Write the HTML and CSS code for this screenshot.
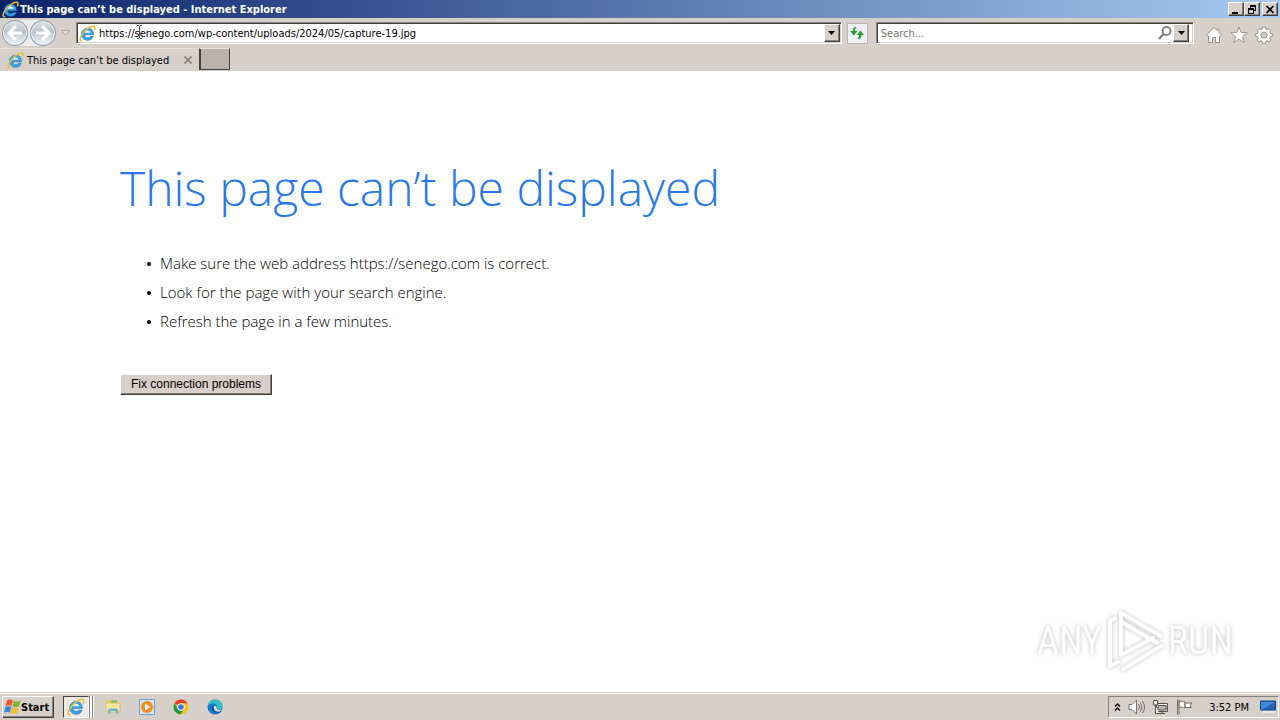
FILE: index.html
```html
<!DOCTYPE html>
<html lang="en">

<head>
    <meta charset="UTF-8">
    <meta name="viewport" content="width=device-width, initial-scale=1.0">
    <title>This page can’t be displayed</title>
    <link rel="stylesheet" href="styles.css">
</head>

<body>
    <!-- Shared icons -->
    <svg class="defs" width="0" height="0">
        <defs>
            <symbol id="ie" viewBox="0 0 16 16">
                <path d="M13.6 9.2H5.2c.2 2 1.500 2.800 3 2.800 1.200 0 2-.5 2.400-1.200h2.800c-.8 2.300-2.700 3.600-5.200 3.600C4.800 14.400 2.400 12 2.400 8.700S4.800 3 8.200 3c3.500 0 5.600 2.500 5.400 6.200z" fill="#3aa5e6" stroke="#1878b8" stroke-width=".6" />
                <path d="M5.300 7.300h5.500C10.600 6 9.600 5.200 8.100 5.200S5.600 6 5.300 7.300z" fill="#e6f4fc" />
                <path d="M2.500 14.800C.2 15 .6 11.500 4 7.400 7.600 3 12.800.2 14.600 1.400c.8.6.6 1.800-.1 3.100" fill="none" stroke="#f2bd2c" stroke-width="1.400" stroke-linecap="round" />
            </symbol>
        </defs>
    </svg>

    <header class="title-bar">
        <svg class="icon"><use href="#ie" /></svg>
        <span class="title-text">This page can’t be displayed - Internet Explorer</span>
        <div class="window-buttons">
            <button type="button" aria-label="Minimize"><svg width="10" height="9" viewBox="0 0 10 9"><path d="M1 7h6v2H1z" /></svg></button>
            <button type="button" aria-label="Restore"><svg width="10" height="9" viewBox="0 0 10 9"><path d="M3 0h6v6H7V5h1V2H4v1H3zM1 3h6v6H1zM2 5v3h4V5z" fill-rule="evenodd" /></svg></button>
            <button type="button" class="close" aria-label="Close"><svg width="10" height="9" viewBox="0 0 10 9"><path d="M1.500 1l7 7M8.500 1l-7 7" stroke="#000" stroke-width="1.600" /></svg></button>
        </div>
    </header>

    <nav class="toolbar">
        <div class="history">
            <button type="button" aria-label="Back"><svg width="26" height="26" viewBox="0 0 26 26"><path d="M14 6l-7 7 7 7M8 13h12" /></svg></button>
            <button type="button" aria-label="Forward"><svg width="26" height="26" viewBox="0 0 26 26"><path d="M12 6l7 7-7 7M18 13H6" /></svg></button>
        </div>
        <button type="button" class="recent" aria-label="Recent pages"><svg width="9" height="6" viewBox="0 0 9 6"><path d="M.5.500h8l-4 4.500z" fill="#e6e2dc" stroke="#aaa49e" /></svg></button>
        <div class="field address">
            <svg class="icon"><use href="#ie" /></svg>
            <input type="text" aria-label="Address" value="https://senego.com/wp-content/uploads/2024/05/capture-19.jpg">
            <button type="button" class="drop" aria-label="Show addresses"><svg width="7" height="4" viewBox="0 0 7 4"><path d="M0 0h7L3.500 4z" /></svg></button>
            <svg class="caret" width="5" height="15" viewBox="0 0 5 15"><path d="M0 .5h2M3 .5h2M2.500 1v12M0 13.500h2M3 13.500h2" stroke="#555" fill="none" /></svg>
        </div>
        <button type="button" class="refresh" aria-label="Refresh"><svg width="16" height="16" viewBox="0 0 16 16"><path d="M7 2C4.500 2 4 3.500 4 6H1l4 4.500L8.500 6H6c0-1.800.2-2.500 1.500-3zM9 14c2.500 0 3.500-1.500 3.500-4H15l-3.500-4.500L7.500 10H10c0 1.800-.2 2.500-1.500 3z" fill="#2b9a35" /></svg></button>
        <div class="field search">
            <input type="text" aria-label="Search" placeholder="Search...">
            <svg width="16" height="16" viewBox="0 0 16 16" fill="none" stroke="#85817d" stroke-width="2"><circle cx="9.500" cy="6" r="4" /><path d="M6.500 9L2 14" stroke-width="2.400" /></svg>
            <button type="button" class="drop" aria-label="Search options"><svg width="7" height="4" viewBox="0 0 7 4"><path d="M0 0h7L3.500 4z" /></svg></button>
        </div>
        <div class="tools">
            <button type="button" aria-label="Home"><svg width="18" height="18" viewBox="0 0 18 18"><path d="M9 1.500L1.500 9 3 10.500l.5-.5v6.500h4v-5h3v5h4V10l.5.500L16.500 9 14 6.500V3h-2v1.500z" /></svg></button>
            <button type="button" aria-label="Favorites"><svg width="18" height="18" viewBox="0 0 18 18"><path d="M9 1l2.200 5.500 6 .4-4.600 3.800 1.500 5.800L9 13.300l-5.100 3.200 1.500-5.800L.8 6.900l6-.4z" /></svg></button>
            <button type="button" aria-label="Tools"><svg width="18" height="18" viewBox="0 0 18 18"><path d="M7.600 1h2.800l.4 2.100 1.300.5 1.800-1.200 2 2-1.200 1.800.5 1.300 2.100.4v2.600l-2.100.4-.5 1.300 1.200 1.800-2 2-1.800-1.200-1.300.5-.4 2H7.600l-.4-2-1.300-.5L4.100 16l-2-2 1.200-1.800-.5-1.300L.7 10.500V7.900l2.100-.4.5-1.300-1.200-1.800 2-2 1.800 1.200 1.300-.5z" /><circle cx="9" cy="9.200" r="3" fill="#d6cfca" /></svg></button>
        </div>
    </nav>

    <div class="tabs">
        <div class="tab">
            <svg class="icon"><use href="#ie" /></svg>
            <span>This page can’t be displayed</span>
            <button type="button" aria-label="Close tab"><svg width="8" height="8" viewBox="0 0 8 8"><path d="M.5.500l7 7M7.500.500l-7 7" stroke="#85807b" stroke-width="1.600" /></svg></button>
        </div>
        <button type="button" class="new-tab" aria-label="New tab"></button>
    </div>

    <main class="content">
        <h1>This page can’t be displayed</h1>
        <ul>
            <li>Make sure the web address https://senego.com is correct.</li>
            <li>Look for the page with your search engine.</li>
            <li>Refresh the page in a few minutes.</li>
        </ul>
        <button type="button" class="fix">Fix connection problems</button>
        <div class="watermark">
            <span>ANY</span>
            <svg width="60" height="66" viewBox="0 0 60 66" fill="none" stroke="#fff" stroke-width="4" stroke-linejoin="round" stroke-linecap="round"><path d="M16 47V5l40 23M18 15l34 20M16 47l32-17M10 10l-5 3v45l6-3M5 58l8-4M18 61l38-23" /></svg>
            <span>RUN</span>
        </div>
    </main>

    <footer class="taskbar">
        <button type="button" class="start">
            <svg width="17" height="16" viewBox="0 0 17 16"><path d="M3 1.500c2-1.500 4-1.300 6-.3L7.500 7C6 6 4 5.800 1.500 7z" fill="#ee582c" /><path d="M10 1.700c2 1.100 4 1 6.500-.1L15 7.300c-2.500 1-4.300.8-6.500-.3z" fill="#78b82c" /><path d="M1.300 8c2-1.200 4-1 6 0l-1.500 5.800c-1.800-1-3.800-1-5.800 0z" fill="#3a86d8" /><path d="M8.200 8.200c2 1.100 4 1.300 6.500.2l-1.500 5.600c-2.300 1-4.300.9-6.500-.2z" fill="#f6bd2b" /></svg>
            Start
        </button>
        <div class="quick-launch">
            <button type="button" class="active" aria-label="Internet Explorer"><svg width="18" height="18"><use href="#ie" /></svg></button>
            <button type="button" aria-label="Explorer"><svg width="18" height="18" viewBox="0 0 18 18"><path d="M2 2h5l1 1.500h7V14H2z" fill="#e9c965" /><path d="M7 2h6v4H7z" fill="#8bc46b" /><path d="M2 5h14v9H2z" fill="#f8e6a0" stroke="#cfae52" stroke-width=".6" /><path d="M4 16v-4q0-1.500 1.500-1.500h7Q14 10.500 14 12v4h-2v-3H6v3z" fill="#6eb4d8" /></svg></button>
            <button type="button" aria-label="Media Player"><svg width="18" height="18" viewBox="0 0 18 18"><path d="M1.500 1.500h15v15h-15z" fill="#d4e6f6" stroke="#6a9fce" /><circle cx="9" cy="9" r="6" fill="#f58a1f" /><path d="M7 5.500l5.500 3.500L7 12.500z" fill="#fff" /></svg></button>
            <button type="button" aria-label="Chrome"><svg width="18" height="18" viewBox="0 0 18 18"><circle cx="9" cy="9" r="7.500" fill="#fbc116" /><path d="M9 9L2.500 5.250A7.500 7.500 0 0 1 15.500 5.250H9z" fill="#e33b2e" /><path d="M2.500 5.250A7.500 7.500 0 0 0 8.500 16.500L12 10.800 9 9 5.700 10.800z" fill="#229a4d" /><circle cx="9" cy="9" r="3.700" fill="#fff" /><circle cx="9" cy="9" r="2.800" fill="#347be5" /></svg></button>
            <button type="button" aria-label="Edge"><svg width="18" height="18" viewBox="0 0 18 18"><circle cx="9" cy="9" r="7.500" fill="#1679ca" /><path d="M1.600 8.500C2 4 5.300 1.500 9 1.500c4.500 0 7.500 3 7.500 6.300 0 2.200-1.600 3.700-3.800 3.700-1.500 0-2.300-.6-2.300-1.200 0-.7.700-.8.700-2 0-1.500-1.600-3-4-3-2.500 0-4.500 1.200-5.500 3.200z" fill="#35bfc2" /><path d="M7 8.500c-1 4 3 6.500 8 4.500" fill="none" stroke="#104c9c" stroke-width="2" /><path d="M8 8.200q3-1 2.600 2.600 1.400 1.800 4.900.8l-1.500 1.800C10 14.400 7 11.500 8 8.200z" fill="#d9e8f0" /></svg></button>
        </div>
        <div class="tray">
            <svg width="7" height="8" viewBox="0 0 7 8" fill="none" stroke="#000" stroke-width="1.400"><path d="M1 3.500L3.500 1 6 3.500M1 7.500L3.500 5 6 7.500" /></svg>
            <svg width="17" height="16" viewBox="0 0 17 16" fill="#fff" stroke="#77736f"><path d="M1 5.500h3L8.500 1v14L4 10.500H1z" /><path d="M10.500 5q2 3 0 6M12.500 3.500q3 4.500 0 9M14.500 2q4 6 0 12" fill="none" /></svg>
            <svg width="17" height="16" viewBox="0 0 17 16" fill="#eee" stroke="#55514e"><path d="M4.500 4.500h11v8h-11zM7 14.500h6M10 12.500v2" /><path d="M6 6.500h8v4.500H6z" fill="#bbb6b0" /><path d="M1.500 1.500h4V6h-4zM3.500 6v8.500H7" /></svg>
            <svg width="17" height="16" viewBox="0 0 17 16" fill="#fff" stroke="#6d6965"><path d="M1.500 1h1.500v14H1.500zM3 2.500c3-1 4 .5 6 .5v6C7 9 6 7.500 3 8.500zM9 4h7l-2 3 1.500 1.500H9z" /></svg>
            <time>3:52 PM</time>
            <button type="button" aria-label="Show desktop"><svg width="16" height="14" viewBox="0 0 16 14"><path d="M.5 1h15v9H.5z" fill="#2264b8" stroke="#124680" /><path d="M1 2h14L2 9.500H1z" fill="#428ad6" /><path d="M3 11h12v2H3z" fill="#e9edf2" /></svg></button>
        </div>
    </footer>
</body>

</html>
```
FILE: styles.css
```css
* {
    box-sizing: border-box;
}

body {
    display: flex;
    flex-direction: column;
    min-height: 100vh;
    margin: 0;
    background-color: #fff;
    color: #000;
    font-family: 'DejaVu Sans Condensed', 'DejaVu Sans', sans-serif;
    font-size: 11px;
}

button {
    flex: none;
    padding: 0;
    border: none;
    background: none;
    color: #000;
    font-family: inherit;
}

svg {
    display: block;
    flex: none;
}

.defs {
    position: absolute;
}

.icon {
    width: 17px;
    height: 17px;
}

/* Window title */
.title-bar {
    display: flex;
    align-items: center;
    height: 18px;
    padding: 0 2px;
    background: linear-gradient(to right, #0a246a, #a6caf0);
    color: #fff;
}

.title-text {
    flex: 1;
    padding-left: 1px;
    font-weight: bold;
    white-space: nowrap;
}

.window-buttons {
    display: flex;
}

.window-buttons button,
.drop,
.start,
.fix {
    background-color: #d6cfca;
    border: 1px solid;
    border-color: #fff #404040 #404040 #fff;
    box-shadow: inset -1px -1px #87817c;
}

.window-buttons button {
    display: flex;
    align-items: center;
    justify-content: center;
    width: 16px;
    height: 14px;
}

.window-buttons .close {
    margin-left: 2px;
}

/* Address and search */
.toolbar {
    display: flex;
    align-items: center;
    height: 30px;
    padding: 0 7px 0 2px;
    background-color: #d6cfca;
}

.history {
    display: flex;
    gap: 2px;
    border-radius: 14px;
    background-color: #eeecec;
}

.history button {
    border-radius: 50%;
    background: linear-gradient(#e5e8ed, #b4bdc9 50%, #c4cdd9 52%, #f5f8fc);
    box-shadow: inset 0 0 0 1px #8f98a3, inset 0 0 0 2px #e8ecf1;
}

.history path {
    fill: none;
    stroke: #fff;
    stroke-width: 3;
}

.recent {
    margin: 0 6px 0 5px;
}

.field {
    position: relative;
    display: flex;
    align-items: center;
    height: 22px;
    background-color: #fff;
    border: 1px solid;
    border-color: #87817c #fff #fff #87817c;
    box-shadow: inset 1px 1px #404040, inset -1px -1px #d6cfca;
}

.field input {
    flex: 1;
    min-width: 0;
    padding: 1px 3px 0;
    border: none;
    outline: none;
    background: none;
    color: #000;
    font-family: inherit;
    font-size: 11px;
}

.field input::placeholder {
    color: #76726f;
    opacity: 1;
}

.address {
    flex: 770;
    padding: 0 1px 0 2px;
}

.caret {
    position: absolute;
    left: 60px;
    top: 2px;
}

.search {
    flex: 315;
    padding: 0 4px 0 1px;
}

.drop {
    display: flex;
    align-items: center;
    justify-content: center;
    width: 16px;
    height: 18px;
}

.refresh {
    display: flex;
    align-items: center;
    justify-content: center;
    width: 21px;
    height: 21px;
    margin: 0 8px 0 5px;
    border: 1px solid #b8b4b2;
    background-color: #edf1f5;
}

.tools {
    display: flex;
    gap: 7px;
    padding: 4px 0 0 11px;
}

.tools svg {
    fill: #fff;
    stroke: #96918d;
}

/* Tabs */
.tabs {
    display: flex;
    height: 23px;
    padding-bottom: 1px;
    background-color: #d6cfca;
}

.tab {
    display: flex;
    align-items: center;
    width: 199px;
    padding: 1px 7px 0;
    border-top: 1px solid #e5e0dc;
}

.tab span {
    flex: 1;
    padding-left: 3px;
    white-space: nowrap;
}

.new-tab {
    width: 31px;
    border: 1px solid;
    border-color: #e5e0dc #404040 #404040;
    box-shadow: inset 1px 0 #404040;
    background-color: #bbb2ae;
}

/* Error page */
.content {
    position: relative;
    flex: 1;
    padding: 82px 120px 0;
    font-family: 'Open Sans', sans-serif;
    font-weight: 300;
}

h1 {
    margin: 0;
    color: #2778ec;
    font-size: 48px;
    font-weight: 300;
    line-height: 70px;
}

ul {
    margin: 26px 0 38px;
    padding-left: 26px;
    font-size: 15px;
    line-height: 29px;
    list-style: none;
}

li {
    display: flex;
    align-items: center;
    gap: 9px;
}

li::before {
    content: '';
    width: 4px;
    height: 4px;
    margin-left: 1px;
    border-radius: 50%;
    background-color: #000;
}

.fix {
    display: block;
    width: 152px;
    height: 21px;
    padding-bottom: 2px;
    font-family: 'Liberation Sans', sans-serif;
    font-size: 12px;
}

.watermark {
    position: absolute;
    right: 47px;
    bottom: 18px;
    display: flex;
    align-items: center;
    gap: 3px;
    color: #fff;
    font-family: 'Roboto Condensed', Roboto, sans-serif;
    font-size: 38px;
    font-weight: 400;
    filter: drop-shadow(0 0 2px #bbb);
}

/* Taskbar */
.taskbar {
    display: flex;
    align-items: center;
    height: 28px;
    padding: 1px 1px 0 2px;
    border-top: 1px solid #d6cfca;
    box-shadow: inset 0 1px #fff;
    background-color: #d6cfca;
}

.start {
    display: flex;
    align-items: center;
    width: 52px;
    height: 22px;
    padding-left: 1px;
    font-size: 11px;
    font-weight: bold;
}

.quick-launch {
    display: flex;
    flex: 1;
    gap: 10px;
    padding-left: 9px;
}

.quick-launch button {
    display: flex;
    align-items: center;
    justify-content: center;
    width: 24px;
    height: 22px;
}

.quick-launch .active {
    width: 26px;
    margin-right: 2px;
    border: 1px solid;
    border-color: #404040 #fff #fff #404040;
    background-color: #ece8e5;
    box-shadow: 1px 0 #87817c, 3px 0 #fff, 4px 0 #87817c, 5px 0 #fff;
}

.tray {
    display: flex;
    align-items: center;
    gap: 7px;
    height: 22px;
    padding: 0 2px 0 5px;
    border: 1px solid;
    border-color: #87817c #fff #fff #87817c;
}

.tray time {
    padding: 0 4px 0 9px;
    white-space: nowrap;
}
```
